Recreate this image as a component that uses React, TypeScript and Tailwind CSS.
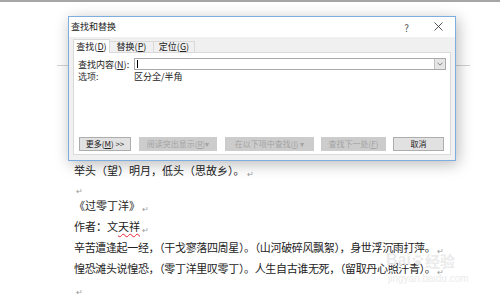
import React from 'react'

const cjk = { fontFamily: '"Noto Sans CJK SC", "Noto Sans", sans-serif' }

function Ret() {
  return <span className="ml-[2px] text-[8px] leading-none text-[#9a9a9a] relative top-[2px]">↵</span>
}

function Acc({ k }: { k: string }) {
  return (
    <span>
      (<span className="underline underline-offset-[1px]">{k}</span>)
    </span>
  )
}

function Btn({ w, ml, disabled, children }: { w: string; ml: string; disabled?: boolean; children: React.ReactNode }) {
  return (
    <div
      className={`${w} ${ml} h-[14px] flex items-center justify-center text-[8px] leading-none border ${
        disabled ? 'bg-[#cccccc] border-[#cccccc] text-[#a3a3a3]' : 'bg-[#e1e1e1] border-[#adadad] text-[#222]'
      }`}
    >
      {children}
    </div>
  )
}

function Dialog() {
  return (
    <div className="absolute left-[68px] top-[16px] w-[388px] h-[145px] flex flex-col border border-[#7eaee0] bg-white shadow-[2px_3px_14px_rgba(0,0,0,0.28)]">
      {/* title bar */}
      <div className="h-[20px] flex items-center pl-[2px] pr-[12px] text-[9px] text-[#222]">
        <span>查找和替换</span>
        <span className="ml-auto mr-[25px] text-[10px] text-[#555]">?</span>
        <svg width="9" height="9" viewBox="0 0 9 9" className="mb-[1px]">
          <path d="M0.5 0.5L8.5 8.5M8.5 0.5L0.5 8.5" stroke="#444" strokeWidth="0.9" />
        </svg>
      </div>

      <div className="flex-1 flex flex-col bg-[#f0f0f0] px-[4px] pt-[2px] pb-[5px]">
        {/* tabs */}
        <div className="h-[14px] flex items-end text-[9px] text-[#222] relative z-10">
          <div className="w-[37px] h-[14px] bg-white border border-b-0 border-[#d9d9d9] flex items-center justify-center pt-[1px]">
            查找<Acc k="D" />
          </div>
          <div className="w-[44px] h-[12px] bg-[#f0f0f0] border border-l-0 border-[#d9d9d9] flex items-center justify-center">
            替换<Acc k="P" />
          </div>
          <div className="w-[41px] h-[12px] bg-[#f0f0f0] border border-l-0 border-[#d9d9d9] flex items-center justify-center">
            定位<Acc k="G" />
          </div>
        </div>

        {/* panel */}
        <div className="flex-1 flex flex-col bg-white border border-[#d9d9d9] -mt-[1px] pl-[4px] pr-[4px] pt-[5px] pb-[3px] text-[9px] text-[#222]">
          <div className="h-[12px] flex items-center">
            <div className="w-[56px] leading-none">
              查找内容<Acc k="N" />:
            </div>
            <div className="flex-1 h-[12px] border border-[#a9a9a9] flex items-stretch">
              <div className="flex-1 flex items-center pl-[2px]">
                <div className="w-px h-[8px] bg-black" />
              </div>
              <div className="w-[11px] bg-[#e6e6e6] border-l border-[#c2c2c2] flex items-center justify-center">
                <svg width="6" height="4" viewBox="0 0 6 4">
                  <path d="M0.5 0.8L3 3.2L5.5 0.8" fill="none" stroke="#666" strokeWidth="0.8" />
                </svg>
              </div>
            </div>
          </div>
          <div className="flex mt-[1px] leading-[12px]">
            <div className="w-[56px] text-[#333]">选项:</div>
            <div>区分全/半角</div>
          </div>

          <div className="flex-1" />

          <div className="flex items-center">
            <Btn w="w-[52px]" ml="ml-[1px]">
              更多<Acc k="M" />&nbsp;&gt;&gt;
            </Btn>
            <Btn w="w-[78px]" ml="ml-[8px]" disabled>
              阅读突出显示<Acc k="R" />▾
            </Btn>
            <Btn w="w-[89px]" ml="ml-[8px]" disabled>
              在以下项中查找<Acc k="I" />&nbsp;▾
            </Btn>
            <Btn w="w-[65px]" ml="ml-[7px]" disabled>
              查找下一处<Acc k="F" />
            </Btn>
            <Btn w="w-[51px]" ml="ml-[7px]">
              取消
            </Btn>
          </div>
        </div>
      </div>
    </div>
  )
}

export default function App() {
  return (
    <div className="relative w-[500px] h-[298px] bg-white overflow-hidden" style={cjk}>
      <div className="h-[2px] bg-[#a6a6a6]" />

      {/* page margin marks */}
      <div className="mt-[63px] flex h-px">
        <div className="ml-[57px] w-[12px] bg-[#d2d2d2]" />
        <div className="ml-[386px] w-[15px] bg-[#d2d2d2]" />
      </div>

      {/* document text */}
      <div className="pl-[74px] pt-[95px] text-[11px] text-[#222]">
        <div className="h-[18px] leading-[18px]">举头（望）明月，低头（思故乡）。<Ret /></div>
        <div className="h-[16px] leading-[16px]"><Ret /></div>
        <div className="h-[20px] leading-[20px]">《过零丁洋》<Ret /></div>
        <div className="h-[22px] leading-[22px]">
          作者：文
          <span className="underline decoration-wavy decoration-[#e23] decoration-[1px] underline-offset-[2px]">天祥</span>
          <Ret />
        </div>
        <div className="h-[20px] leading-[20px] tracking-[-0.35px]">辛苦遭逢起一经，（干戈寥落四周星）。（山河破碎风飘絮），身世浮沉雨打萍。<Ret /></div>
        <div className="h-[22px] leading-[22px] tracking-[-0.35px]">惶恐滩头说惶恐，（零丁洋里叹零丁）。人生自古谁无死，（留取丹心照汗青）。<Ret /></div>
        <div className="h-[18px] leading-[18px]"><Ret /></div>
      </div>

      {/* watermark */}
      <div className="absolute left-[386px] top-[252px] flex flex-col items-start text-[#ebebeb] leading-none pointer-events-none" style={{ fontFamily: '"Liberation Sans", "Noto Sans CJK SC", sans-serif' }}>
        <div className="flex items-center text-[16px] font-bold">
          <span>Bai</span>
          <svg width="12" height="12" viewBox="0 0 12 12" className="mx-[1px]">
            <g fill="#e8e8e8">
              <ellipse cx="6" cy="8.5" rx="3" ry="2.5" />
              <circle cx="2" cy="5" r="1.3" />
              <circle cx="4.5" cy="2.5" r="1.3" />
              <circle cx="7.5" cy="2.5" r="1.3" />
              <circle cx="10" cy="5" r="1.3" />
            </g>
          </svg>
          <span className="text-[15px]" style={cjk}>经验</span>
        </div>
        <div className="text-[10px] mt-[6px] ml-[2px]">jingyan.baidu.com</div>
      </div>

      <Dialog />
    </div>
  )
}
